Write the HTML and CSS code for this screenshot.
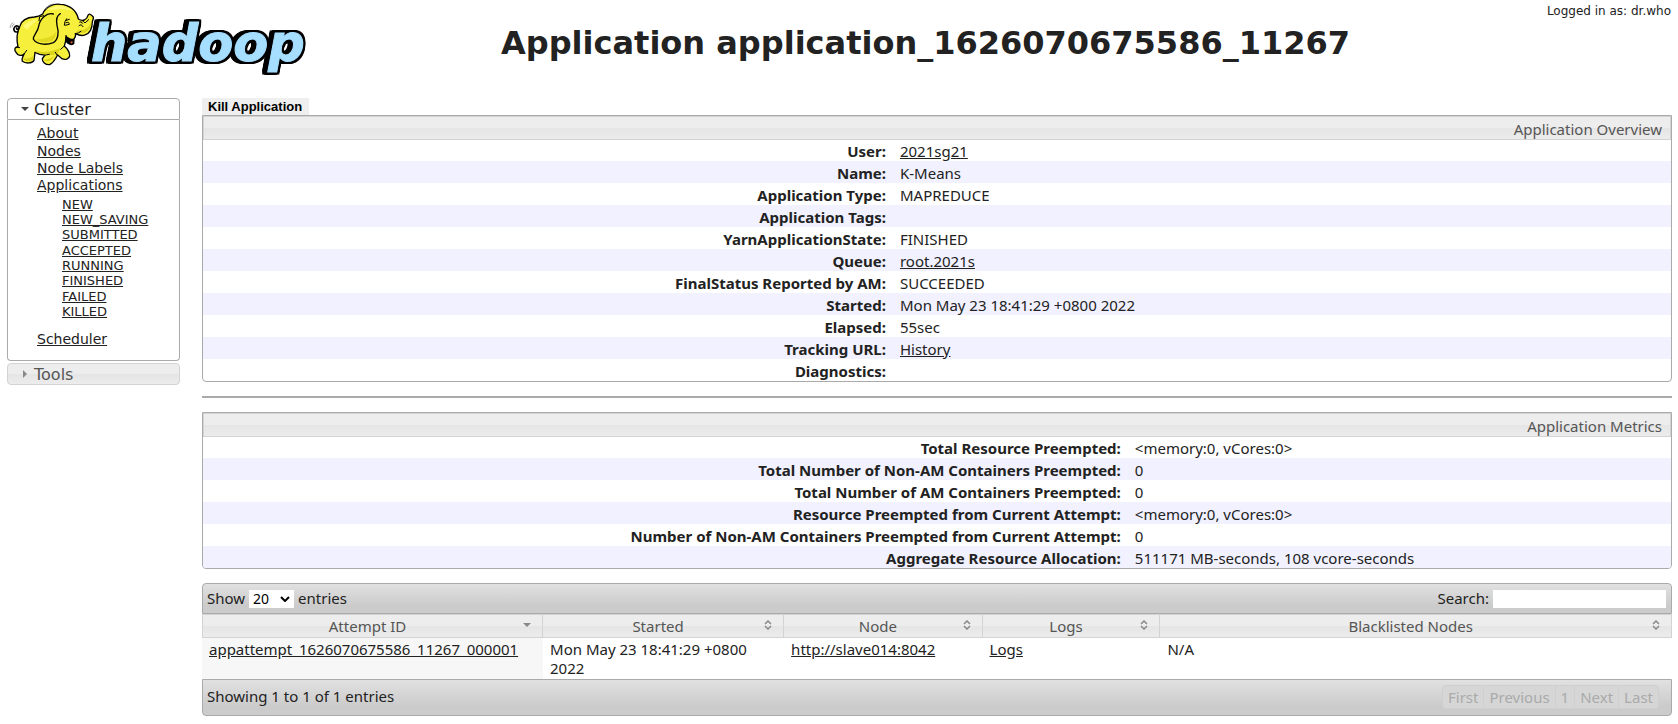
FILE: index.html
```html
<!DOCTYPE html>
<html lang="en">
<head>
<meta charset="utf-8">
<title>Application application_1626070675586_11267</title>
<link rel="stylesheet" href="styles.css">
</head>
<body>
<header class="header">
  <svg class="logo" viewBox="0 0 320 80" role="img" aria-label="hadoop">
    <text class="wordmark" x="91" y="61">hadoop</text>
    <g transform="translate(5 0) scale(.3333)" stroke="#000" stroke-width="4" stroke-linecap="round" stroke-linejoin="round" fill="none">
      <path fill="#f6f03c" d="M45 78C50 60 66 52 88 51C100 50 106 47 113 42C120 22 142 10 166 13C193 14 215 31 220 57C234 66 246 58 249 46C252 39 258 43 265 51C266 58 263 60 262 65C262 84 256 99 240 105C229 109 219 105 212 101C212 113 207 121 197 120C190 119 184 112 183 107C183 124 180 132 178 138C187 146 194 157 194 168C192 177 181 181 171 176L158 165C151 176 148 187 134 194C121 195 111 185 112 176L120 165C109 165 97 161 90 157L87 181C82 191 61 191 52 184C49 177 54 168 58 161C50 169 39 169 31 154C27 146 31 141 39 141C34 120 36 96 45 78Z"/>
      <path fill="#dcd31c" stroke="none" d="M91 153Q125 162 165 145L159 162Q122 170 91 156ZM56 179Q70 187 84 181L86 165Q78 177 56 175ZM116 181Q133 190 150 168L137 174ZM214 95Q244 108 258 79L259 67Q247 94 219 91Z"/>
      <path fill="#fff974" stroke="none" d="M127 30Q147 15 171 18Q190 21 201 32Q173 23 150 30ZM54 77Q74 60 100 57Q82 73 65 89Z"/>
      <path fill="#f2eb38" d="M145 42C125 36 104 57 101 79C99 95 84 106 85 117C94 133 122 137 145 128C159 120 163 98 156 76C153 60 155 47 166 41"/>
      <path fill="#e1d822" stroke="none" d="M92 119Q111 131 138 124C149 118 153 108 153 96Q141 116 92 119Z"/>
      <path d="M38 95C29 99 23 88 29 81C35 73 46 81 40 87C36 89 34 86 35 84" stroke-width="5"/>
      <path d="M102 62L104 50L116 47M185 56Q178 64 178 75M184 61L193 58M183 68Q193 64 193 73L180 76M224 66Q230 62 232 70M222 77Q229 70 234 80M232 62L239 68M210 101Q221 101 228 94M58 161L65 151M178 138L167 148M122 165L133 163M156 165L151 157M241 68L251 59M36 141L44 143" stroke-width="3"/>
      <path fill="#000" d="M186 112Q194 119 207 119L206 131Q194 138 184 125Z"/>
      <path fill="#c94e35" stroke="none" d="M195 126Q201 121 204 126L200 131Z"/>
      <path d="M124 28Q125 17 137 14M129 22Q135 14 144 12M15 83Q16 71 24 68M21 81Q21 74 28 72" stroke="#777" stroke-width="2"/>
    </g>
  </svg>
  <h1 class="title">Application application_1626070675586_11267</h1>
  <div class="user">Logged in as: dr.who</div>
</header>
<div class="layout">
  <nav class="nav">
    <h3 class="nav-head nav-open"><svg class="caret" viewBox="0 0 8 8"><path d="M0 2h8L4 6z"/></svg>Cluster</h3>
    <div class="nav-body">
      <ul class="links">
        <li><a href="#">About</a></li>
        <li><a href="#">Nodes</a></li>
        <li><a href="#">Node Labels</a></li>
        <li><a href="#">Applications</a>
          <ul class="states">
            <li><a href="#">NEW</a></li>
            <li><a href="#">NEW_SAVING</a></li>
            <li><a href="#">SUBMITTED</a></li>
            <li><a href="#">ACCEPTED</a></li>
            <li><a href="#">RUNNING</a></li>
            <li><a href="#">FINISHED</a></li>
            <li><a href="#">FAILED</a></li>
            <li><a href="#">KILLED</a></li>
          </ul>
        </li>
        <li><a href="#">Scheduler</a></li>
      </ul>
    </div>
    <h3 class="nav-head nav-closed"><svg class="caret" viewBox="0 0 8 8"><path d="M2 0v8L6 4z"/></svg>Tools</h3>
  </nav>
  <main class="main">
    <button class="kill" type="button">Kill Application</button>
    <section class="panel overview">
      <h2 class="panel-head">Application Overview</h2>
      <table class="info">
        <tr><th scope="row">User:</th><td><a href="#">2021sg21</a></td></tr>
        <tr><th scope="row">Name:</th><td>K-Means</td></tr>
        <tr><th scope="row">Application Type:</th><td>MAPREDUCE</td></tr>
        <tr><th scope="row">Application Tags:</th><td></td></tr>
        <tr><th scope="row">YarnApplicationState:</th><td>FINISHED</td></tr>
        <tr><th scope="row">Queue:</th><td><a href="#">root.2021s</a></td></tr>
        <tr><th scope="row">FinalStatus Reported by AM:</th><td>SUCCEEDED</td></tr>
        <tr><th scope="row">Started:</th><td>Mon May 23 18:41:29 +0800 2022</td></tr>
        <tr><th scope="row">Elapsed:</th><td>55sec</td></tr>
        <tr><th scope="row">Tracking URL:</th><td><a href="#">History</a></td></tr>
        <tr><th scope="row">Diagnostics:</th><td></td></tr>
      </table>
    </section>
    <hr class="rule">
    <section class="panel metrics">
      <h2 class="panel-head">Application Metrics</h2>
      <table class="info">
        <tr><th scope="row">Total Resource Preempted:</th><td>&lt;memory:0, vCores:0&gt;</td></tr>
        <tr><th scope="row">Total Number of Non-AM Containers Preempted:</th><td>0</td></tr>
        <tr><th scope="row">Total Number of AM Containers Preempted:</th><td>0</td></tr>
        <tr><th scope="row">Resource Preempted from Current Attempt:</th><td>&lt;memory:0, vCores:0&gt;</td></tr>
        <tr><th scope="row">Number of Non-AM Containers Preempted from Current Attempt:</th><td>0</td></tr>
        <tr><th scope="row">Aggregate Resource Allocation:</th><td>511171 MB-seconds, 108 vcore-seconds</td></tr>
      </table>
    </section>
    <section class="attempts">
      <div class="bar bar-top">
        <label class="length">Show
          <span class="select-box"><select class="select"><option>20</option><option>40</option><option>60</option></select><svg class="chevron" viewBox="0 0 10 6"><path d="M1 1l4 4 4-4"/></svg></span>
          entries</label>
        <label class="filter">Search: <input class="search" type="text"></label>
      </div>
      <table class="grid">
        <colgroup><col class="c-id"><col class="c-start"><col class="c-node"><col class="c-logs"><col></colgroup>
        <thead>
          <tr>
            <th scope="col"><div class="th">Attempt ID<svg class="sort down" viewBox="0 0 8 10"><path d="M0 3h8L4 7z"/></svg></div></th>
            <th scope="col"><div class="th">Started<svg class="sort" viewBox="0 0 8 10"><path d="M1 4l3-3 3 3M1 6l3 3 3-3"/></svg></div></th>
            <th scope="col"><div class="th">Node<svg class="sort" viewBox="0 0 8 10"><path d="M1 4l3-3 3 3M1 6l3 3 3-3"/></svg></div></th>
            <th scope="col"><div class="th">Logs<svg class="sort" viewBox="0 0 8 10"><path d="M1 4l3-3 3 3M1 6l3 3 3-3"/></svg></div></th>
            <th scope="col"><div class="th">Blacklisted Nodes<svg class="sort" viewBox="0 0 8 10"><path d="M1 4l3-3 3 3M1 6l3 3 3-3"/></svg></div></th>
          </tr>
        </thead>
        <tbody>
          <tr>
            <td class="sorted"><a href="#">appattempt_1626070675586_11267_000001</a></td>
            <td>Mon May 23 18:41:29 +0800 2022</td>
            <td><a href="#">http://slave014:8042</a></td>
            <td><a href="#">Logs</a></td>
            <td>N/A</td>
          </tr>
        </tbody>
      </table>
      <div class="bar bar-bottom">
        <span>Showing 1 to 1 of 1 entries</span>
        <div class="pager">
          <button type="button" disabled>First</button><button type="button" disabled>Previous</button><button type="button" disabled>1</button><button type="button" disabled>Next</button><button type="button" disabled>Last</button>
        </div>
      </div>
    </section>
  </main>
</div>
</body>
</html>
```
FILE: styles.css
```css
* { box-sizing: border-box; }
body {
  margin: 0;
  background: #fff;
  color: #222;
  font: 15px/19px "Noto Sans", sans-serif;
}
a { color: #222; text-decoration: underline; }
h1, h2, h3, ul { margin: 0; padding: 0; font-weight: normal; }
ul { list-style: none; }

.header {
  display: grid;
  grid-template-columns: 320px 1fr 140px;
  height: 98px;
  padding-right: 7px;
}
.logo { display: block; width: 320px; height: 80px; }
.wordmark {
  font: italic bold 51px "DejaVu Sans", Verdana, sans-serif;
  fill: #a6deff;
  stroke: #a6deff;
  stroke-width: 1px;
  filter: drop-shadow(2px 0 0 #000) drop-shadow(-2px 0 0 #000) drop-shadow(0 2px 0 #000) drop-shadow(0 -2px 0 #000) drop-shadow(-3px 0 0 #000);
}
.title {
  padding-top: 23px;
  text-align: center;
  white-space: nowrap;
  font: bold 32px/40px "DejaVu Sans", Verdana, sans-serif;
}
.user {
  padding-top: 4px;
  text-align: right;
  white-space: nowrap;
  font: 12px/15px "DejaVu Sans", Verdana, sans-serif;
}

.layout {
  display: grid;
  grid-template-columns: 173px 1fr;
  gap: 22px;
  align-items: start;
  padding: 0 6px 8px 7px;
}
.nav { font-family: "DejaVu Sans", Verdana, sans-serif; }
.nav-head {
  display: flex;
  align-items: center;
  gap: 5px;
  height: 22px;
  padding-left: 13px;
  font-size: 16px;
}
.caret { width: 8px; height: 8px; }
.nav-open { border: 1px solid #aaa; border-radius: 4px 4px 0 0; color: #222; }
.nav-open .caret { fill: #444; }
.nav-closed {
  margin-top: 2px;
  border: 1px solid #d3d3d3;
  border-radius: 4px;
  background: linear-gradient(#ededed 50%, #e5e5e5 50%, #ececec);
  color: #555;
}
.nav-closed .caret { fill: #888; }
.nav-body {
  padding: 5px 0 12px 29px;
  border: 1px solid #aaa;
  border-top: 0;
  border-radius: 0 0 4px 4px;
}
.links { font-size: 14px; line-height: 17px; }
.links > li:first-child { padding-bottom: 1px; }
.states {
  padding: 3px 0 12px 25px;
  font-size: 13px;
  line-height: 15px;
}
.states li:nth-child(3n) { padding-bottom: 1px; }

.main { min-width: 0; }
.kill {
  display: block;
  height: 17px;
  padding: 0 7px 0 6px;
  border: 0;
  background: #efefef;
  color: #000;
  font: bold 13px/17px "Liberation Sans", Arial, sans-serif;
}
.panel { border: 1px solid #aaa; border-radius: 0 0 4px 4px; overflow: hidden; }
.panel-head {
  height: 24px;
  padding: 1px 8px 0 0;
  border: 1px solid #d3d3d3;
  background: linear-gradient(#ededed 50%, #e5e5e5 50%, #ececec);
  color: #555;
  text-align: right;
  font-size: 15px;
  line-height: 22px;
}
.info { width: 100%; border-collapse: collapse; table-layout: fixed; }
.info th, .info td { height: 22px; padding: 1px 7px 0; line-height: 20px; }
.info tr:first-child > * { height: 21px; }
.info th { text-align: right; font-weight: bold; }
.overview th { width: 47%; }
.metrics th { width: 63%; }
.info tr:nth-child(even) { background: #f1f1ff; }
.rule { height: 2px; margin: 14px 0; border: 0; background: #aaa; }
.attempts { margin-top: 14px; }

.bar {
  display: flex;
  align-items: center;
  justify-content: space-between;
  padding: 0 5px;
  border: 1px solid #aaa;
  background: linear-gradient(#e1e1e1, #cbcbcb 75%, #cccccc);
}
.bar-top { height: 31px; padding-left: 4px; border-radius: 4px 4px 0 0; }
.bar-bottom { height: 37px; padding: 0 12px 2px 4px; border-radius: 0 0 4px 4px; }
.length, .filter { display: flex; align-items: center; gap: 4px; }
.select-box { display: flex; position: relative; }
.select {
  appearance: none;
  width: 45px;
  height: 18px;
  padding: 0 4px;
  border: 0;
  border-radius: 0;
  background: #fff;
  color: #000;
  font: 14px/18px "Noto Sans", sans-serif;
}
.chevron {
  position: absolute;
  right: 4px;
  top: 6px;
  width: 10px;
  height: 6px;
  fill: none;
  stroke: #000;
  stroke-width: 2;
  pointer-events: none;
}
.search { width: 173px; height: 18px; padding: 0 4px; border: 0; background: #fff; font: 14px "Noto Sans", sans-serif; }

.grid { width: 100%; border-collapse: separate; border-spacing: 0; table-layout: fixed; }
.c-id { width: 23.2%; }
.c-start { width: 16.4%; }
.c-node { width: 13.5%; }
.c-logs { width: 12.1%; }
.grid th {
  height: 24px;
  padding: 0 9px;
  border: 1px solid #d3d3d3;
  border-left: 0;
  background: linear-gradient(#ededed 50%, #e5e5e5 50%, #ececec);
  color: #555;
  font-weight: normal;
}
.grid th:first-child { border-left: 1px solid #d3d3d3; }
.th { display: grid; grid-template-columns: 1fr 10px; line-height: 22px; }
.sort { width: 8px; height: 10px; margin-top: 5px; fill: none; stroke: #888; stroke-width: 1.5; }
.down { fill: #888; stroke: none; }
.grid td { height: 41px; padding: 2px 7px 1px; vertical-align: top; }
.grid .sorted { background: #f7f7f7; }

.pager { display: flex; }
.pager button {
  height: 24px;
  padding: 0 5px;
  border: 1px solid #cfcfcf;
  border-left: 0;
  background: #d6d6d6;
  color: #aaa;
  font: 15px/20px "Noto Sans", sans-serif;
}
.pager button:first-child { border-left: 1px solid #cfcfcf; border-radius: 4px 0 0 4px; }
.pager button:last-child { border-radius: 0 4px 4px 0; }
```
